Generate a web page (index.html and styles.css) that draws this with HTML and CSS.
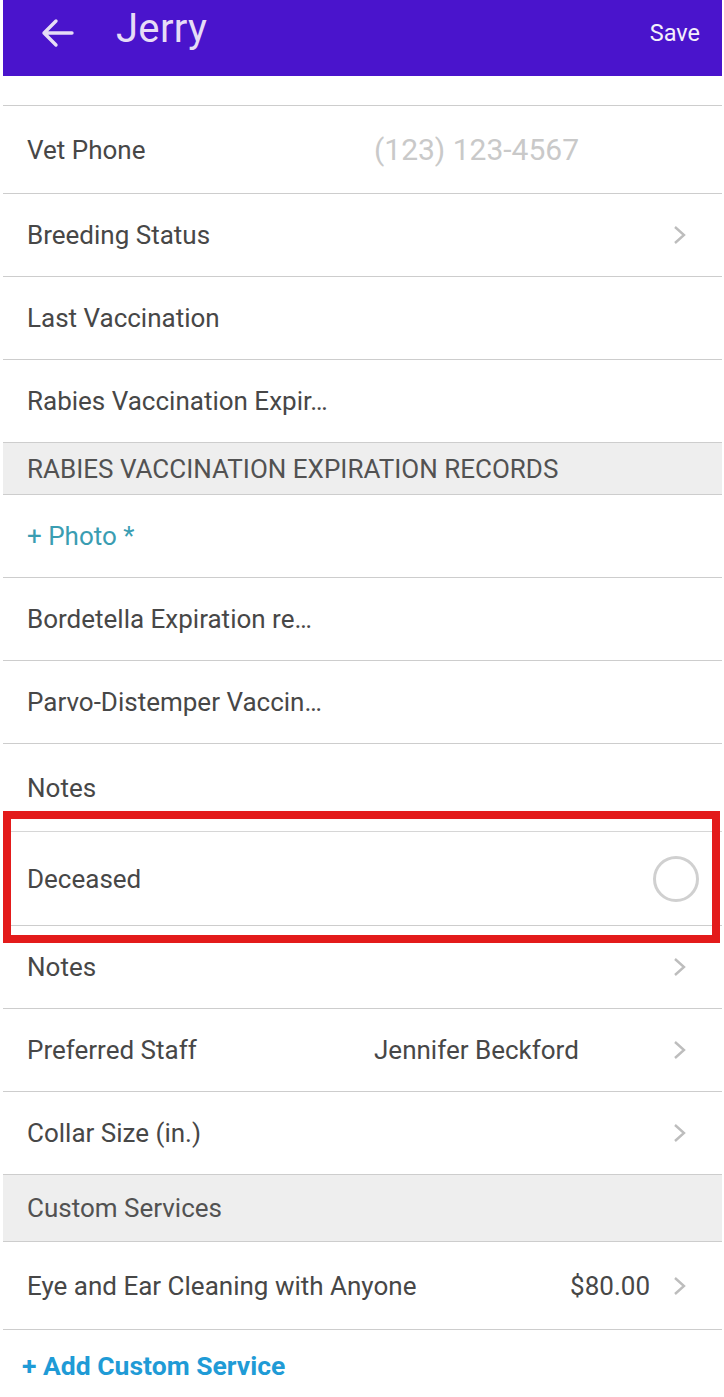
FILE: index.html
```html
<!DOCTYPE html>
<html>
<head>
<meta charset="utf-8">
<link rel="stylesheet" href="styles.css">
</head>
<body>
<div class="screen">
  <header class="topbar">
    <svg class="back" width="34" height="30" viewBox="0 0 34 30"><path d="M32 15H4M16 3L4 15l12 12" fill="none" stroke="#e6dcf6" stroke-width="3.4" stroke-linecap="round" stroke-linejoin="round"/></svg>
    <h1 class="title">Jerry</h1>
    <span class="save">Save</span>
  </header>
  <div class="spacer"></div>
  <div class="row tall"><span class="label">Vet Phone</span><span class="value placeholder">(123) 123-4567</span></div>
  <div class="row"><span class="label">Breeding Status</span><span class="value"></span><svg class="chev" width="14" height="20" viewBox="0 0 14 20"><path d="M2 2l9 8-9 8" fill="none" stroke="#bdbdbd" stroke-width="2.4"/></svg></div>
  <div class="row"><span class="label">Last Vaccination</span></div>
  <div class="row"><span class="label">Rabies Vaccination Expir…</span></div>
  <div class="section">RABIES VACCINATION EXPIRATION RECORDS</div>
  <div class="row"><span class="label link">+ Photo *</span></div>
  <div class="row"><span class="label">Bordetella Expiration re…</span></div>
  <div class="row"><span class="label">Parvo-Distemper Vaccin…</span></div>
  <div class="row tall noline"><span class="label">Notes</span></div>
  <div class="highlight">
    <div class="row deceased"><span class="label">Deceased</span><span class="value"></span><span class="radio"></span></div>
    <div class="mark"></div>
  </div>
  <div class="row"><span class="label">Notes</span><span class="value"></span><svg class="chev" width="14" height="20" viewBox="0 0 14 20"><path d="M2 2l9 8-9 8" fill="none" stroke="#bdbdbd" stroke-width="2.4"/></svg></div>
  <div class="row"><span class="label">Preferred Staff</span><span class="value">Jennifer Beckford</span><svg class="chev" width="14" height="20" viewBox="0 0 14 20"><path d="M2 2l9 8-9 8" fill="none" stroke="#bdbdbd" stroke-width="2.4"/></svg></div>
  <div class="row"><span class="label">Collar Size (in.)</span><span class="value"></span><svg class="chev" width="14" height="20" viewBox="0 0 14 20"><path d="M2 2l9 8-9 8" fill="none" stroke="#bdbdbd" stroke-width="2.4"/></svg></div>
  <div class="section big">Custom Services</div>
  <div class="row tall"><span class="label wide">Eye and Ear Cleaning with Anyone</span><span class="value price">$80.00</span><svg class="chev" width="14" height="20" viewBox="0 0 14 20"><path d="M2 2l9 8-9 8" fill="none" stroke="#bdbdbd" stroke-width="2.4"/></svg></div>
  <div class="row add"><span class="addlink">+ Add Custom Service</span></div>
</div>
</body>
</html>
```

FILE: styles.css
```css
html, body {
  margin: 0;
  padding: 0;
  background: #ffffff;
}
body {
  font-family: Roboto, "Liberation Sans", sans-serif;
  color: #474747;
}
.screen {
  margin-left: 3px;
  width: 719px;
}
.topbar {
  height: 76px;
  background: #4a14cc;
  display: flex;
  align-items: center;
  padding: 0 22px 12px 37px;
  box-sizing: border-box;
}
.back {
  flex: 0 0 auto;
  margin-top: 2px;
}
.title {
  margin: 0 0 8px 42px;
  font-weight: 400;
  font-size: 40px;
  color: #e6dcf6;
  flex: 1;
  letter-spacing: 0.3px;
}
.save {
  font-size: 23.5px;
  color: #f4f0fb;
  margin-top: 2px;
}
.spacer {
  height: 30px;
  border-bottom: 1px solid #cdcdcd;
  box-sizing: border-box;
}
.row {
  display: flex;
  align-items: center;
  height: 83px;
  padding: 0 35px 0 24px;
  border-bottom: 1px solid #cdcdcd;
  box-sizing: border-box;
  font-size: 26px;
}
.row.tall {
  height: 88px;
}
.row.noline {
  border-bottom: 1px solid #d6d6d6;
}
.label {
  flex: 0 0 347px;
  white-space: nowrap;
}
.label.wide {
  flex: 1 1 auto;
}
.value {
  flex: 1;
  white-space: nowrap;
}
.value.price {
  flex: 0 0 auto;
  margin-right: 23px;
}
.placeholder {
  color: #c9c9c9;
  font-size: 30px;
}
.chev {
  flex: 0 0 auto;
  display: block;
}
.link {
  color: #3a9db2;
}
.section {
  height: 52px;
  background: #eeeeee;
  display: flex;
  align-items: center;
  padding-left: 24px;
  font-size: 26px;
  color: #525252;
  border-bottom: 1px solid #cdcdcd;
  box-sizing: border-box;
}
.section.big {
  height: 67px;
}
.highlight {
  position: relative;
}
.deceased {
  height: 94px;
  padding-right: 23px;
}
.radio {
  width: 46px;
  height: 46px;
  border: 3px solid #d0d0d0;
  border-radius: 50%;
  box-sizing: border-box;
  flex: 0 0 auto;
}
.mark {
  position: absolute;
  left: 0;
  right: 2px;
  top: -21px;
  bottom: -17px;
  border: 8px solid #e31b1b;
  pointer-events: none;
}
.row.add {
  border-bottom: none;
  padding-left: 19px;
  height: 70px;
}
.addlink {
  color: #1f9bd6;
  font-weight: 700;
  font-size: 26.5px;
}
```
